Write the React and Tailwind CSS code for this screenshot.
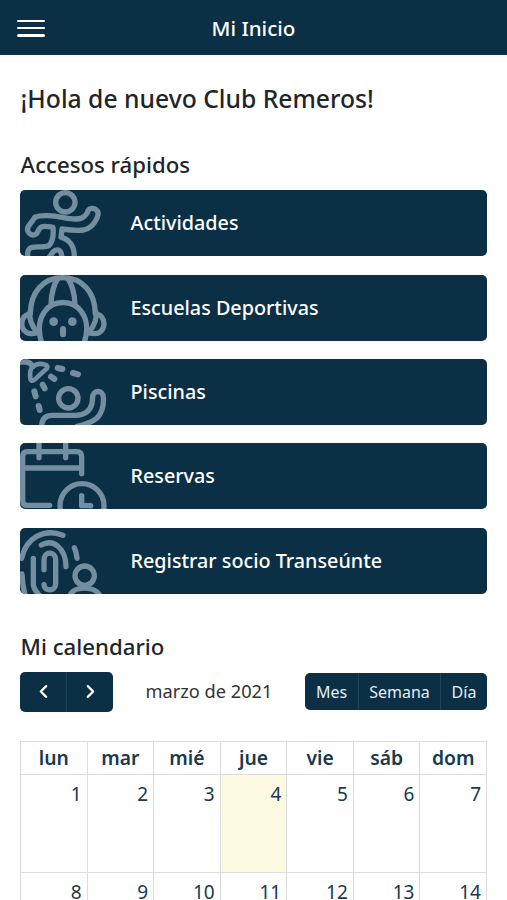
const iconProps = {
  width: 90,
  height: 66,
  fill: 'none',
  stroke: '#738ea1',
  strokeWidth: 16,
  strokeLinecap: 'round',
  strokeLinejoin: 'round',
  className: 'shrink-0',
};

function RunnerIcon() {
  return (
    <svg {...iconProps} viewBox="31 16 270 198">
      <circle cx="167" cy="53" r="29" />
      <path d="M76 98C92 90 130 92 158 98C178 103 206 105 216 100C228 94 233 86 235 78C240 70 251 69 259 75C268 81 266 91 262 100C253 121 239 132 222 136C204 139 176 136 157 133L154 158C176 163 196 181 194 222" />
      <path d="M76 98L58 122C46 140 63 157 80 148L90 131C98 121 116 126 130 128C132 149 128 173 117 183C104 188 82 186 67 188C55 192 51 205 56 222" />
      <path d="M115 222C122 213 126 208 130 202C137 194 148 193 153 202C157 209 157 214 156 222" />
    </svg>
  );
}

function GirlIcon() {
  return (
    <svg {...iconProps} viewBox="31 21 270 198">
      <path d="M62 136C63 74 99 29 159 29S256 74 257 136" />
      <path d="M124 111C124 75 135 44 145 31M196 111C196 75 184 44 174 31" />
      <path d="M95 222C86 190 87 156 104 132C130 94 190 94 216 132C233 156 235 190 224 222" />
      <path d="M61 132C57 151 66 172 82 194M258 132C263 151 254 172 238 194" />
      <path d="M58 138C31 146 31 181 50 193C61 199 70 198 82 194M262 138C288 146 288 181 270 193C259 199 250 198 238 194" />
      <g fill="#738ea1" stroke="none">
        <circle cx="132" cy="161" r="13" />
        <circle cx="188" cy="161" r="13" />
        <rect x="151" y="174" width="18" height="34" rx="9" />
      </g>
    </svg>
  );
}

function ShowerIcon() {
  return (
    <svg {...iconProps} viewBox="31 20 270 198">
      <path d="M28 29H50C60 30 65 35 69 43" />
      <path d="M69 43C81 33 99 32 110 39C116 44 112 49 105 54L75 82C69 88 62 85 62 76C60 62 60 52 69 43Z" strokeWidth="14" />
      <path d="M144 47L158 50M190 62L205 66M124 73L134 80M99 97L105 108M74 117L78 132M87 161L90 173" strokeWidth="18" />
      <circle cx="176" cy="138" r="29" />
      <path d="M96 222C96 202 105 190 126 189H198C222 189 242 177 247 153L249 134C250 112 280 112 281 134C283 164 278 181 262 197C244 212 225 217 202 222" />
    </svg>
  );
}

function BookingIcon() {
  return (
    <svg {...iconProps} viewBox="31 20 270 198">
      <path d="M120 207H53Q39 207 39 193V61Q39 46 53 46H201Q216 46 216 61V112M39 95H216" />
      <path d="M88 20V64M168 20V64" />
      <circle cx="217" cy="208" r="66" />
      <path d="M216 178V208H243" />
    </svg>
  );
}

function FingerprintIcon() {
  return (
    <svg {...iconProps} viewBox="31 20 270 198">
      <path d="M36 111C50 48 104 20 160 42" />
      <path d="M95 71C130 52 168 78 169 136M194 79C199 90 201 100 202 111" />
      <path d="M37 158C38 181 41 202 46 222M71 111V187C71 204 81 211 89 222" />
      <path d="M103 145V115C103 89 138 89 138 115V187C138 211 103 211 103 190" />
      <circle cx="225" cy="163" r="29" />
      <path d="M181 222C193 193 255 193 270 222" />
    </svg>
  );
}

const accesos = [
  { label: 'Actividades', Icon: RunnerIcon },
  { label: 'Escuelas Deportivas', Icon: GirlIcon },
  { label: 'Piscinas', Icon: ShowerIcon },
  { label: 'Reservas', Icon: BookingIcon },
  { label: 'Registrar socio Transeúnte', Icon: FingerprintIcon },
];

const dias = ['lun', 'mar', 'mié', 'jue', 'vie', 'sáb', 'dom'];
const semanas = [
  [1, 2, 3, 4, 5, 6, 7],
  [8, 9, 10, 11, 12, 13, 14],
];
const HOY = 4;

function Chevron({ d }) {
  return (
    <svg width="9" height="15" viewBox="0 0 10 16" fill="none" stroke="white" strokeWidth="2.5" strokeLinecap="round" strokeLinejoin="round">
      <path d={d} />
    </svg>
  );
}

export default function App() {
  return (
    <div className="h-[900px] w-[507px] overflow-hidden bg-white font-['Noto_Sans',sans-serif] text-[#212529]">
      <header className="grid h-[54.5px] grid-cols-[1fr_auto_1fr] items-center bg-[#0b3045] px-[17px] text-white">
        <button className="flex w-7 flex-col gap-[5px] pt-[2px]" aria-label="Menú">
          <span className="h-[2.4px] rounded-full bg-white"></span>
          <span className="h-[2.4px] rounded-full bg-white"></span>
          <span className="h-[2.4px] rounded-full bg-white"></span>
        </button>
        <h1 className="pt-[2px] text-[20.6px] leading-7 font-medium">Mi Inicio</h1>
      </header>

      <main className="px-5">
        <h2 className="mt-[26.5px] h-9 pl-[0.6px] text-[24.7px] leading-9 font-medium whitespace-nowrap">¡Hola de nuevo Club Remeros!</h2>
        <h3 className="mt-8 h-8 pl-[0.6px] text-[22.2px] leading-8 font-medium">Accesos rápidos</h3>

        <nav className="mt-[9.4px] flex flex-col gap-[18.3px]">
          {accesos.map(({ label, Icon }) => (
            <a key={label} className="flex h-[66px] items-center gap-[20.5px] overflow-hidden rounded-[5px] bg-[#0b3045] text-white">
              <Icon />
              <span className="text-[19.75px] leading-7 font-medium whitespace-nowrap">{label}</span>
            </a>
          ))}
        </nav>

        <h3 className="mt-[37px] h-8 pl-[0.6px] text-[22.2px] leading-8 font-medium">Mi calendario</h3>

        <div className="mt-[9px] flex h-10 items-center justify-between">
          <div className="flex h-10 w-[93px] rounded-[5px] bg-[#0b3045]">
            <button className="flex flex-1 items-center justify-center border-r border-[#204357]" aria-label="Anterior">
              <Chevron d="M8 2L2 8L8 14" />
            </button>
            <button className="flex flex-1 items-center justify-center" aria-label="Siguiente">
              <Chevron d="M2 2L8 8L2 14" />
            </button>
          </div>
          <span className="text-[18.2px] whitespace-nowrap text-[#333]">marzo de 2021</span>
          <div className="flex h-[37.5px] w-[182px] rounded-[5px] bg-[#0b3045] text-base text-[#e4edf3]">
            <button className="w-[54px] border-r border-[#204357]">Mes</button>
            <button className="w-[82px] border-r border-[#204357]">Semana</button>
            <button className="flex-1">Día</button>
          </div>
        </div>

        <table className="mt-[29px] w-full table-fixed border-collapse text-[#18394e]">
          <thead>
            <tr className="h-[33px]">
              {dias.map((dia) => (
                <th key={dia} className="border border-[#dddddd] p-0 text-[19.3px] leading-7 font-semibold">{dia}</th>
              ))}
            </tr>
          </thead>
          <tbody>
            {semanas.map((semana) => (
              <tr key={semana[0]} className="h-[98px]">
                {semana.map((n) => (
                  <td key={n} className={`border border-[#dddddd] p-0 pt-[5px] pr-[5px] text-right align-top text-[19px] leading-7 ${n === HOY ? 'bg-[#fcfae1]' : ''}`}>
                    {n}
                  </td>
                ))}
              </tr>
            ))}
          </tbody>
        </table>
      </main>
    </div>
  );
}
